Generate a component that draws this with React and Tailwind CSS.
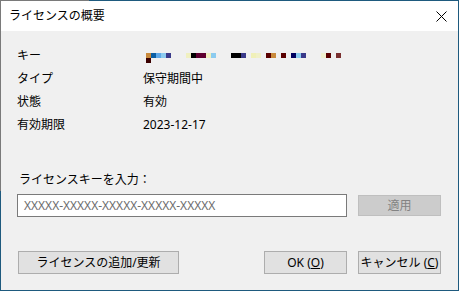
import React from "react";

const F = { fontFamily: '"Noto Sans", "Noto Sans CJK JP", sans-serif' };

const blocks = [
  [0, 0, "#c98a3c"], [5, 0, "#0b5fa5"], [10, 0, "#5fa8e8"], [15, 0, "#8ccbef"], [20, 0, "#3a3a8a"],
  [40, 0, "#f0f0c0"], [45, 0, "#000000"], [50, 0, "#5e0030"], [55, 0, "#5e0030"], [60, 0, "#f0f0c0"], [65, 0, "#8ccbef"],
  [85, 0, "#000000"], [90, 0, "#000000"], [95, 0, "#3a3a8a"],
  [105, 0, "#f0f0b8"], [110, 0, "#f0f0c8"],
  [120, 0, "#5a0000"], [125, 0, "#c98a3c"], [135, 0, "#5a0000"],
  [145, 0, "#000060"], [150, 0, "#8ccbef"], [155, 0, "#3a3a8a"],
  [175, 0, "#f0f0d0"], [180, 0, "#5a0000"], [190, 0, "#7a3030"],
  [0, 5, "#3a0000"],
];

function Row({ label, children }) {
  return (
    <div className="flex h-[23px] items-center">
      <div className="w-[126px]">{label}</div>
      <div>{children}</div>
    </div>
  );
}

function Btn({ className = "", children }) {
  return (
    <div
      className={
        "flex h-[23px] items-center justify-center border border-[#adadad] bg-[#e1e1e1] text-[12px] text-black " +
        className
      }
    >
      {children}
    </div>
  );
}

export default function App() {
  return (
    <div
      className="w-[459px] h-[291px] p-px bg-[linear-gradient(115deg,#7a7a7a_81px,#1e5a7e_81px)] text-[12px] text-black"
      style={F}
    >
      <div className="flex h-full flex-col">
        <div className="flex h-[30px] items-center justify-between bg-white pl-[8px] pr-[11px]">
          <span className="text-[12px]">ライセンスの概要</span>
          <svg width="11" height="11" viewBox="0 0 11 11">
            <path d="M0.5 0.5 L10.5 10.5 M10.5 0.5 L0.5 10.5" stroke="#000" strokeWidth="1" />
          </svg>
        </div>
        <div className="flex flex-1 flex-col bg-[#f0f0f0] pl-[16px] pr-[17px]">
          <div className="mt-[13px] flex flex-col">
            <Row label="キー">
              <svg width="200" height="12" viewBox="0 0 200 12" className="mt-[6px]" shapeRendering="crispEdges">
                {blocks.map(([x, y, c], i) => (
                  <rect key={i} x={x + 3} y={y} width="5" height="5" fill={c} />
                ))}
              </svg>
            </Row>
            <Row label="タイプ">保守期間中</Row>
            <Row label="状態">有効</Row>
            <Row label="有効期限">2023-12-17</Row>
          </div>
          <div className="mt-[35px] h-[18px] leading-[18px] pl-[2px]">ライセンスキーを入力：</div>
          <div className="mt-[5px] flex items-center gap-[11px]">
            <div className="flex h-[23px] w-[331px] items-center border border-[#7a7a7a] bg-white pl-[6px] text-[#6d6d6d]">
              XXXXX-XXXXX-XXXXX-XXXXX-XXXXX
            </div>
            <div className="flex h-[21px] w-[83px] items-center justify-center border border-[#bfbfbf] bg-[#cccccc] text-[#838383]">
              適用
            </div>
          </div>
          <div className="mt-[34px] flex items-center pl-[1px]">
            <Btn className="w-[161px]">ライセンスの追加/更新</Btn>
            <div className="flex-1" />
            <Btn className="w-[83px]">
              OK (<span className="underline">O</span>)
            </Btn>
            <Btn className="ml-[11px] w-[83px]">
              キャンセル (<span className="underline">C</span>)
            </Btn>
          </div>
        </div>
      </div>
    </div>
  );
}
